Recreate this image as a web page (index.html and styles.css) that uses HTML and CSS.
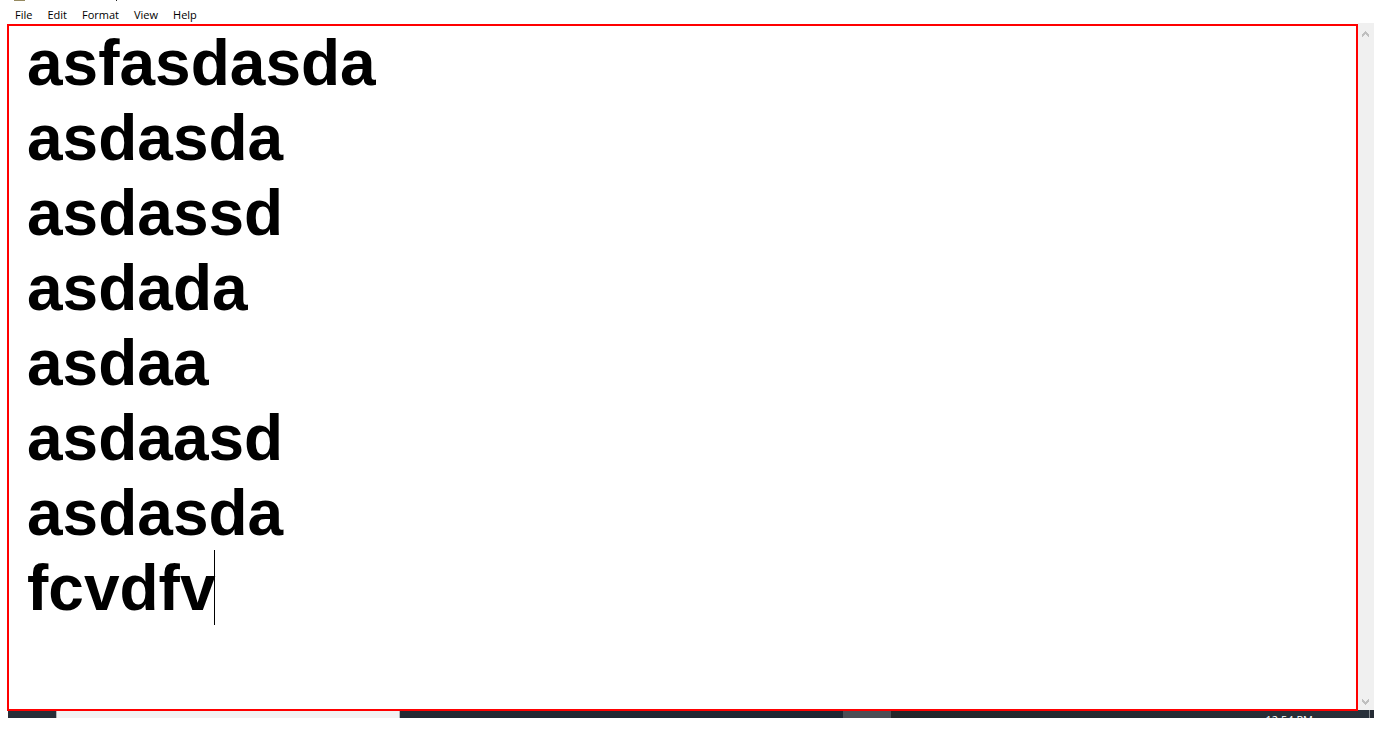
FILE: index.html
```html
<!DOCTYPE html>
<html lang="en">
<head>
<meta charset="utf-8">
<title>Notepad</title>
<link rel="stylesheet" href="styles.css">
</head>
<body>
<div class="window">
  <header class="top">
    <svg class="title-edge" width="120" height="2" viewBox="0 0 120 2" shape-rendering="crispEdges" aria-hidden="true">
      <path fill="#968a60" d="M6 0h11v1H6z"/>
      <path fill="#222" d="M108 0h1v1h-1z"/>
    </svg>
    <nav class="menu" aria-label="Menu bar">
      <button type="button">File</button>
      <button type="button">Edit</button>
      <button type="button">Format</button>
      <button type="button">View</button>
      <button type="button">Help</button>
    </nav>
  </header>
  <main class="body">
    <div class="editor">
      <textarea class="text" aria-label="Document text" spellcheck="false">asfasdasda
asdasda
asdassd
asdada
asdaa
asdaasd
asdasda
fcvdfv</textarea>
      <span class="caret"></span>
      <span class="frame"></span>
    </div>
    <div class="scrollbar">
      <button type="button" aria-label="Scroll up"><svg width="7" height="6" viewBox="0 0 7 6" shape-rendering="crispEdges"><path fill="#bfbfbf" d="M3 0h1v1h1v1h1v1h1v3H6V5H5V4H4V3H3v1H2v1H1v1H0V3h1V2h1V1h1z"/></svg></button>
      <button type="button" aria-label="Scroll down"><svg width="7" height="6" viewBox="0 0 7 6" shape-rendering="crispEdges"><path fill="#bfbfbf" d="M3 6h1V5h1V4h1V3h1V0H6v1H5v1H4v1H3V2H2V1H1V0H0v3h1v1h1v1h1z"/></svg></button>
    </div>
  </main>
  <footer class="taskbar">
    <span class="start"></span>
    <span class="search"></span>
    <span class="apps"></span>
    <span class="active"></span>
    <span class="tray"><time class="clock">12:54 PM</time></span>
    <span class="desktop"></span>
  </footer>
</div>
</body>
</html>
```
FILE: styles.css
```css
* { box-sizing: border-box; }
body { margin: 0; background: #fff; }
button {
  margin: 0;
  border: 0;
  background: none;
  color: inherit;
  font: inherit;
}
.window {
  display: flex;
  flex-direction: column;
  height: 100vh;
  padding: 0 8px 17px;
}
.top {
  display: flex;
  flex-direction: column;
  height: 23px;
}
.title-edge { display: block; flex: none; }
.menu {
  display: flex;
  flex: 1;
  gap: 1px;
  align-items: center;
  color: #000;
  font: 11px/18px "Open Sans", "Noto Sans", sans-serif;
}
.menu button { padding: 4px 7px 0; }
.body {
  display: flex;
  flex: 1;
  min-height: 0;
}
.editor {
  position: relative;
  flex: 1;
  padding-top: 3px;
}
.text {
  display: block;
  width: 100%;
  height: 100%;
  margin: 0;
  padding: 0 19px;
  border: 0;
  outline: 0;
  overflow: hidden;
  resize: none;
  background: #fff;
  color: #000;
  font: bold 64px/75px "Liberation Sans", Arial, sans-serif;
}
.caret {
  position: absolute;
  top: 527px;
  left: 206px;
  width: 1px;
  height: 75px;
  background: #000;
}
.frame {
  position: absolute;
  inset: 1px 0 -1px -1px;
  border: 2px solid #f00;
  pointer-events: none;
}
.scrollbar {
  display: flex;
  flex-direction: column;
  justify-content: space-between;
  width: 16px;
  background: #f0f0f0;
}
.scrollbar button {
  display: flex;
  align-items: center;
  justify-content: center;
  height: 17px;
  padding: 5px 1px 0 0;
}
.scrollbar button:last-child { padding-top: 0; }
.taskbar {
  display: flex;
  height: 8px;
  overflow: hidden;
  background: #222730;
}
.start { width: 48px; background: #282e38; }
.search {
  width: 344px;
  border: solid #b4b6b8;
  border-width: 0 1px;
  background: #f2f2f2;
}
.apps {
  flex: 1;
  background: linear-gradient(90deg, #242932, #1e2632);
}
.active { width: 48px; background: #4b4e55; }
.tray {
  display: flex;
  justify-content: flex-end;
  width: 478px;
  padding-right: 56px;
  background: linear-gradient(90deg, #222629, #28303a);
}
.clock {
  padding-top: 2px;
  color: #fff;
  font: 11px/16px "Open Sans", "Noto Sans", sans-serif;
}
.desktop {
  width: 5px;
  border-left: 1px solid #858a90;
  background: #252b34;
}
```
